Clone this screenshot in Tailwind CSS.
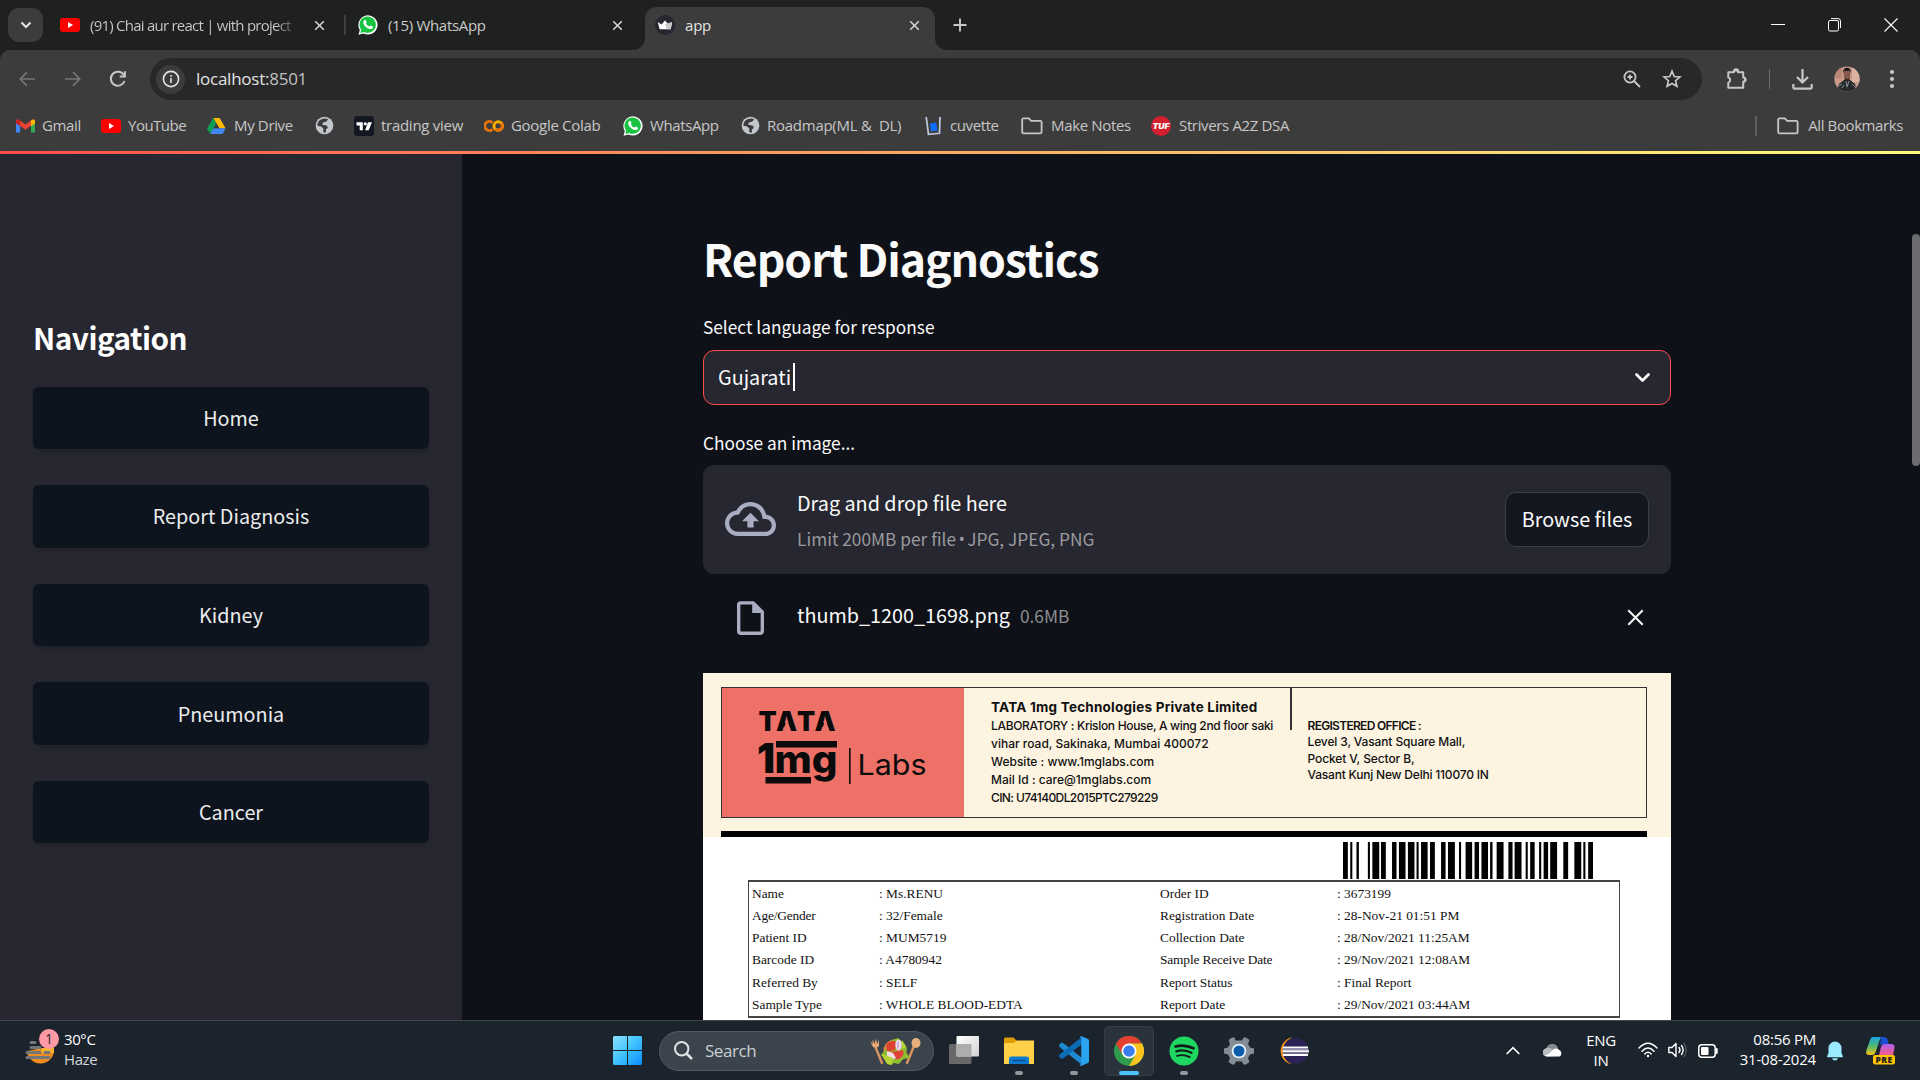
<!DOCTYPE html>
<html lang="en">
<head>
<meta charset="utf-8">
<title>app</title>
<script src="https://cdn.jsdelivr.net/npm/@tailwindcss/browser@4"></script>
</head>
<body class="w-[1920px] h-[1080px] overflow-hidden bg-[#0e1117] flex flex-col font-['Open_Sans','Noto_Sans',sans-serif]">

<svg class="hidden">
  <symbol id="yt" viewBox="0 0 20 14"><rect width="20" height="14" rx="3" fill="#f00"/><path d="M8 4v6l5-3z" fill="#fff"/></symbol>
  <symbol id="wa" viewBox="0 0 20 20"><path d="M.5 19.7 1.8 15A9.6 9.6 0 1 1 5.400 18.400z" fill="#fff"/><path d="M2.300 17.900l.9-3.200A8.200 8.200 0 1 1 6 17z" fill="#19c341"/><path d="M6.300 5.300c.5-.6 1.300-.6 1.600.1l.7 1.500c.2.500-.8 1.200-.6 1.600.8 1.500 1.900 2.500 3.400 3.100.5.100 1-1.200 1.500-1l1.700.8c.7.400.3 1.500-.3 2-1.100.9-2.600.7-4.200 0-2.200-1-3.700-2.700-4.600-4.600-.6-1.300-.2-2.600.8-3.500z" fill="#fff"/></symbol>
  <symbol id="globe" viewBox="0 0 20 20"><circle cx="10" cy="10" r="9.300" fill="#c1c5cc"/><path d="M9 2.800C5 3.200 2.400 6.400 2.500 10.200l4.100.9 2.200 2.200-.1 3.900c1 .2 2 .2 2.900-.1l-.2-3 2-1.500-.4-2.400-2.800-.6-2-.1-.3-1.800 1.600-1.300 2.700-.4.900-1.800 1.100-.2C12.600 3 11 2.500 9 2.800z" fill="#3c3c3c"/><path d="M12 5.500l-.8 1.600-3 .5-.4 1.500 5.500 1 .4 2.600 2.700-.6c1-1.600 1.200-3.600.6-5.500z" fill="#c1c5cc"/></symbol>
  <symbol id="folder" viewBox="0 0 22 18"><path d="M1.200 14.900V2.700c0-.8.600-1.400 1.400-1.400h5.200l2.400 2.600h9c.8 0 1.400.6 1.400 1.400v9.600c0 .8-.6 1.400-1.400 1.400H2.600c-.8 0-1.400-.6-1.400-1.400z" fill="none" stroke="#c7c7c7" stroke-width="1.800"/></symbol>
  <symbol id="x" viewBox="0 0 12 12"><path d="M1.300 1.300l9.400 9.400M10.700 1.300l-9.400 9.400" stroke="#d4d4d4" stroke-width="1.700" fill="none"/></symbol>
</svg>

<!-- Tab strip -->
<header class="h-[50px] shrink-0 bg-[#1f2120] flex items-center pl-2 text-[15px] text-[#c9cac9] whitespace-nowrap">
  <div class="w-[35px] h-[34px] rounded-[11px] bg-[#3c3c3c] flex items-center justify-center">
    <svg width="12" height="8" viewBox="0 0 12 8"><path d="M1.500 1.500L6 6l4.500-4.500" fill="none" stroke="#e3e3e3" stroke-width="2"/></svg>
  </div>
  <div class="w-[301px] h-full flex items-center pl-[17px]">
    <svg width="20" height="14"><use href="#yt"/></svg>
    <span class="ml-[10px] w-[211px] tracking-[-0.76px] bg-linear-to-r from-[#c9cac9] from-88% to-[#1f2120] bg-clip-text text-transparent">(91) Chai aur react | with project</span>
    <svg class="ml-[13px]" width="11" height="11"><use href="#x"/></svg>
  </div>
  <div class="w-0.5 h-5 bg-[#3f4140]"></div>
  <div class="w-[287px] h-full flex items-center pl-3">
    <svg width="20" height="20"><use href="#wa"/></svg>
    <span class="ml-[10px] flex-1 tracking-[-0.3px]">(15) WhatsApp</span>
    <svg class="mr-[10px]" width="11" height="11"><use href="#x"/></svg>
  </div>
  <svg class="self-end" width="12" height="12"><path d="M12 0v12H0A12 12 0 0 0 12 0" fill="#3c3c3c"/></svg>
  <div class="w-[290px] h-[43px] self-end rounded-t-[12px] bg-[#3c3c3c] flex items-center pl-[10px] pb-[7px] text-[#e3e3e3]">
    <svg width="20" height="20" viewBox="0 0 20 20"><circle cx="10" cy="10" r="10" fill="#262730"/><path d="M2.800 7l3.700 2.500L10 5.500l3.500 4L17.200 7l-1.500 7.200H4.600z" fill="#fff"/><path d="M10 9l7.200-2-1.500 7.200H12z" fill="#c9c9cc"/></svg>
    <span class="ml-[10px] flex-1 tracking-[-0.2px]">app</span>
    <svg class="mr-[15px]" width="11" height="11"><use href="#x"/></svg>
  </div>
  <svg class="self-end" width="12" height="12"><path d="M0 0v12h12A12 12 0 0 1 0 0" fill="#3c3c3c"/></svg>
  <svg class="ml-[6px]" width="14" height="14" viewBox="0 0 14 14"><path d="M7 .5v13M.5 7h13" stroke="#c7c7c7" stroke-width="1.900"/></svg>
  <div class="ml-auto pr-[22px] flex items-center gap-[43px]">
    <svg width="14" height="14"><path d="M0 6.500h14" stroke="#fff"/></svg>
    <svg width="13" height="14" viewBox="0 0 13 14" fill="none" stroke="#fff"><rect x=".5" y="2.500" width="10" height="10.500" rx="1.500"/><path d="M3 .6h7a2.500 2.500 0 0 1 2.500 2.500v7"/></svg>
    <svg width="14" height="14" viewBox="0 0 14 14"><path d="M.5.500l13 13M13.500.500l-13 13" stroke="#fff" stroke-width="1.100"/></svg>
  </div>
</header>

<!-- Toolbar and bookmarks -->
<div class="h-[101px] shrink-0 bg-[#1f2120]">
 <div class="h-full rounded-t-[10px] bg-[#3c3c3c] pt-2">
  <div class="h-[42px] flex items-center pl-[19px]">
    <svg width="17" height="16" viewBox="0 0 17 16" fill="none" stroke="#757575" stroke-width="1.700"><path d="M16 8H1.500M8 1.200L1.300 8 8 14.800"/></svg>
    <svg class="ml-[28px]" width="17" height="16" viewBox="0 0 17 16" fill="none" stroke="#757575" stroke-width="1.700"><path d="M1 8h14.500M9 1.200L15.700 8 9 14.800"/></svg>
    <svg class="ml-[28px]" width="18" height="18" viewBox="0 0 18 18" fill="none" stroke="#c7c7c7" stroke-width="2"><path d="M15.500 11A7 7 0 1 1 15 5.300"/><path d="M15.900 1.300v5.200h-5.200"/></svg>
    <div class="ml-[23px] w-[1552px] h-[42px] rounded-full bg-[#282828] flex items-center pl-[6px]">
      <div class="size-[29px] rounded-full bg-[#3c3c3c] flex items-center justify-center">
        <svg width="18" height="18" viewBox="0 0 18 18"><circle cx="9" cy="9" r="7.600" fill="none" stroke="#e3e3e3" stroke-width="1.600"/><path d="M9 8v5M9 5v1.700" stroke="#e3e3e3" stroke-width="1.600"/></svg>
      </div>
      <span class="ml-[11px] text-[17px] tracking-[-0.25px] text-[#e3e3e3]">localhost:<span class="text-[#c0c0c0]">8501</span></span>
      <svg class="ml-auto" width="18" height="18" viewBox="0 0 18 18" fill="none" stroke="#c7c7c7" stroke-width="1.800"><circle cx="7" cy="7" r="5.600"/><path d="M11 11l6 6M7 4.500v5M4.500 7h5"/></svg>
      <svg class="ml-[21px] mr-[20px]" width="20" height="20" viewBox="0 0 20 20"><path d="M10 2.200l2.200 5.300 5.700.5-4.300 3.700 1.300 5.600L10 14.400l-4.900 2.900 1.300-5.600L2.100 8l5.700-.5z" fill="none" stroke="#c7c7c7" stroke-width="1.700"/></svg>
    </div>
    <svg class="ml-[24px]" width="22" height="22" viewBox="0 0 22 22"><path d="M2.300 4.300h5.500a2 2 0 0 1 4.200 0h5.200v5.200a2 2 0 0 1 0 4.200v6H2.300v-5a2.700 2.700 0 0 0 0-5.200z" fill="none" stroke="#c7c7c7" stroke-width="2" stroke-linejoin="round"/><path d="M8 3.500a2 2 0 0 1 4 0M18 9.800a2 2 0 0 1 0 3.800" stroke="#c7c7c7" stroke-width="2.400" fill="none"/></svg>
    <div class="ml-[21px] w-px h-5 bg-[#6b6b6b]"></div>
    <svg class="ml-[22px]" width="21" height="21" viewBox="0 0 21 21" fill="none" stroke="#c7c7c7" stroke-width="2.200"><path d="M10.500 0v13M5 8l5.500 5.500L16 8M1.300 15v3.200c0 .8.500 1.400 1.300 1.400h15.800c.8 0 1.300-.6 1.300-1.400V15"/></svg>
    <svg class="ml-[21px]" width="26" height="26" viewBox="0 0 26 26"><defs><clipPath id="av"><circle cx="13" cy="13" r="12.600"/></clipPath></defs><g clip-path="url(#av)"><rect width="26" height="26" fill="#c99a88"/><path d="M0 0h8v12H0z" fill="#b98776"/><path d="M18 2h8v14h-8z" fill="#dcb3a2"/><path d="M3 26l2-8 5-4h6l5 4 2 8z" fill="#25292e"/><ellipse cx="13" cy="8.500" rx="3.300" ry="5" fill="#87584a"/><path d="M9 7c-.3-7 8.300-7 8 0l-1.500-2.200h-5z" fill="#171517"/><path d="M10.500 10.500c1 3.500 4.500 3.500 5.200 0l-.2 3-2.500 2-2.300-2z" fill="#2a1b19"/><path d="M12 15l1 6 2-6M5 20l3-2M18 18l4 4M8 22l2-3" stroke="#8a9096" fill="none"/></g></svg>
    <svg class="ml-[29px]" width="6" height="22" viewBox="0 0 6 22" fill="#c7c7c7"><circle cx="3" cy="4" r="2.100"/><circle cx="3" cy="11" r="2.100"/><circle cx="3" cy="18" r="2.100"/></svg>
  </div>
  <nav class="h-[51px] flex items-center pl-[16px] text-[15px] text-[#c7c7c7] whitespace-nowrap">
    <div class="w-[85px] flex items-center gap-[7px]"><svg width="19" height="14" viewBox="0 0 19 14"><path d="M0 2v11.500h4.200V6z" fill="#4285f4"/><path d="M15 6v7.500h4V2z" fill="#34a853"/><path d="M0 2.500C0 .4 2 0 3.300 1L9.500 5.600 15.500 1C17 0 19 .4 19 2.500l-4 4-5.500 4.200-5.300-4z" fill="#ea4335"/><path d="M15 1.400C17 0 19 .4 19 2.500v2L15 7.300z" fill="#fbbc04"/><path d="M0 2.500C0 .4 2 0 4.200 1.500v5.800L0 4.300z" fill="#c5221f"/></svg><span class="tracking-[-0.35px]">Gmail</span></div>
    <div class="w-[106px] flex items-center gap-[7px]"><svg width="20" height="14"><use href="#yt"/></svg><span class="tracking-[-0.5px]">YouTube</span></div>
    <div class="w-[108px] flex items-center gap-[8px]"><svg width="19" height="18" viewBox="0 0 19 18"><path d="M6.200 1h6.400l6 10.300h-6.200z" fill="#ffba00"/><path d="M6.200 1l3.200 5.500L3.300 17 0 11.500z" fill="#0f9d58"/><path d="M6.400 11.300h12.200L15.600 17H3.300z" fill="#4285f4"/><path d="M9.400 6.500l3 4.800H6.500z" fill="#3c3c3c"/></svg><span class="tracking-[-0.35px]">My Drive</span></div>
    <div class="w-[39px]"><svg width="19" height="19"><use href="#globe"/></svg></div>
    <div class="w-[130px] flex items-center gap-[7px]"><svg width="20" height="20" viewBox="0 0 20 20"><rect width="20" height="20" rx="3" fill="#131722"/><path d="M2.500 6.300h6.300v8H5.700V9.400H2.500zM14 6.300h4l-3.300 8h-3.600z" fill="#fff"/><circle cx="11.300" cy="7.800" r="1.600" fill="#fff"/></svg><span class="tracking-[-0.28px]">trading view</span></div>
    <div class="w-[139px] flex items-center gap-[7px]"><svg width="20" height="20" viewBox="0 0 20 20" fill="none" stroke-width="3"><path d="M8.500 6.600A4.600 4.600 0 1 0 8.500 13.400" stroke="#e8710a"/><circle cx="14.200" cy="10" r="4.300" stroke="#f9ab00"/><path d="M17.300 6.900a4.400 4.400 0 0 1-6.200 6.200" stroke="#e8710a"/></svg><span class="tracking-[-0.3px]">Google Colab</span></div>
    <div class="w-[118px] flex items-center gap-[7px]"><svg width="20" height="20"><use href="#wa"/></svg><span class="tracking-[-0.4px]">WhatsApp</span></div>
    <div class="w-[184px] flex items-center gap-[7px]"><svg width="19" height="19"><use href="#globe"/></svg><span class="tracking-[-0.26px]">Roadmap(ML &amp;&nbsp; DL)</span></div>
    <div class="w-[96px] flex items-center gap-[8px]"><svg width="17" height="20" viewBox="0 0 17 20"><path d="M1.200 1l2.300 17.300 11-1L15 1" fill="none" stroke="#b9c7db" stroke-width="1.800"/><path d="M5 7.500l6-1 1.500 8-6.500 1z" fill="#0d6efd"/></svg><span class="tracking-[-0.4px]">cuvette</span></div>
    <div class="w-[130px] flex items-center gap-[8px]"><svg width="22" height="18"><use href="#folder"/></svg><span class="tracking-[-0.35px]">Make Notes</span></div>
    <div class="flex items-center gap-2"><svg width="20" height="20" viewBox="0 0 20 20"><circle cx="10" cy="10" r="10" fill="#d41f30"/><text x="1.500" y="12.600" textLength="17" lengthAdjust="spacingAndGlyphs" font-family="Inter" font-weight="900" font-style="italic" font-size="7" fill="#fff">TUF</text></svg><span class="tracking-[-0.35px]">Strivers A2Z DSA</span></div>
    <div class="ml-auto w-0.5 h-5 bg-[#5f5f5f]"></div>
    <div class="ml-[20px] mr-[17px] flex items-center gap-[9px]"><svg width="22" height="18"><use href="#folder"/></svg><span class="tracking-[-0.4px]">All Bookmarks</span></div>
  </nav>
 </div>
</div>

<!-- Page -->
<div class="h-[3px] shrink-0 bg-linear-to-r from-[#ff4b4b] to-[#fffd80]"></div>
<div class="h-[866px] shrink-0 flex relative overflow-hidden font-['Noto_Sans_CJK_SC',sans-serif] text-[#fafafa] text-[19.800px]">
  <aside class="w-[462px] shrink-0 bg-[#262730] px-[33px] pt-[162px]">
    <h2 class="h-[44px] leading-[44px] text-[29.700px] tracking-[-0.5px] font-bold text-white">Navigation</h2>
    <div class="mt-[27px] flex flex-col gap-[36px] text-[#ececec]">
      <button class="h-[62.400px] rounded-[6px] bg-[#0d141e] shadow-md pb-px">Home</button>
      <button class="h-[62.400px] rounded-[6px] bg-[#0d141e] shadow-md pb-px">Report Diagnosis</button>
      <button class="h-[62.400px] rounded-[6px] bg-[#0d141e] shadow-md">Kidney</button>
      <button class="h-[62.400px] rounded-[6px] bg-[#0d141e] shadow-md">Pneumonia</button>
      <button class="h-[62.400px] rounded-[6px] bg-[#0d141e] shadow-md">Cancer</button>
    </div>
  </aside>
  <main class="ml-[241px] w-[968px] shrink-0 pt-[74px]">
    <h1 class="h-[60px] leading-[60px] text-[44.600px] tracking-[-1.050px] font-bold">Report Diagnostics</h1>
    <div class="mt-[26px] h-[26px] leading-[26px] text-[17.300px]">Select language for response</div>
    <div class="mt-[10px] h-[55px] rounded-[11px] border border-[#ff4b4b] bg-[#262730] flex items-center pl-[14px] pr-[20px]">
      <span class="mb-[2px]">Gujarati</span><span class="ml-[2px] w-0.5 h-[28px] mb-[2px] bg-white"></span>
      <svg class="ml-auto" width="15" height="10" viewBox="0 0 15 10"><path d="M1.500 1.500l6 6 6-6" fill="none" stroke="#fafafa" stroke-width="2.700" stroke-linecap="round" stroke-linejoin="round"/></svg>
    </div>
    <div class="mt-[25px] h-[26px] leading-[26px] text-[17.300px]">Choose an image...</div>
    <div class="mt-[9px] h-[109px] rounded-[11px] bg-[#262730] flex items-center px-[22px]">
      <svg class="mb-px" width="51" height="34" viewBox="0 4 24 16" fill="#a9adc1"><path d="M19.350 10.040A7.490 7.490 0 0 0 12 4C9.110 4 6.600 5.640 5.350 8.040A5.994 5.994 0 0 0 0 14c0 3.310 2.690 6 6 6h13c2.760 0 5-2.240 5-5 0-2.640-2.050-4.780-4.650-4.960zM19 18H6c-2.210 0-4-1.790-4-4 0-2.050 1.530-3.760 3.560-3.970l1.070-.11.500-.95A5.469 5.469 0 0 1 12 6c2.620 0 4.880 1.860 5.390 4.430l.3 1.500 1.530.11A2.980 2.980 0 0 1 22 15c0 1.650-1.350 3-3 3zM8 13h2.550v3h2.900v-3H16l-4-4z"/></svg>
      <div class="ml-[21px] flex flex-col">
        <span class="h-[36px] leading-[36px]">Drag and drop file here</span>
        <span class="h-[30px] leading-[30px] mt-[3px] text-[17.300px] text-[#9a9a9e]">Limit 200MB per file <span class="font-['Open_Sans'] -mx-[1.500px] inline-block">•</span> JPG, JPEG, PNG</span>
      </div>
      <button class="ml-auto w-[144px] h-[55px] rounded-[11px] border border-[#3e4048] bg-[#131720] pb-[2px]">Browse files</button>
    </div>
    <div class="h-[99px] flex items-center pl-[34px] pr-[27px] pb-[13px]">
      <svg class="mt-px" width="27" height="34" viewBox="4 2 16 20" fill="#a9adc1"><path d="M14 2H6c-1.100 0-2 .9-2 2v16c0 1.100.9 2 2 2h12c1.100 0 2-.9 2-2V8l-6-6zM6 20V4h7v5h5v11H6z"/></svg>
      <span class="ml-[33px] mb-1">thumb_1200_1698.png</span>
      <span class="ml-[10px] text-[17.300px] mb-[2px] text-[#8c8e93]">0.6MB</span>
      <svg class="ml-auto" width="17" height="17" viewBox="0 0 17 17"><path d="M1.300 1.300l14.400 14.400M15.700 1.300L1.300 15.700" stroke="#fafafa" stroke-width="2"/></svg>
    </div>

    <!-- Lab report -->
    <div class="h-[347px] bg-white text-[#111] flex flex-col">
      <div class="h-[164px] shrink-0 bg-[#fcf3e0] pl-[18px] pr-[24px] pt-[14px]">
        <div class="h-[131px] border-[1.500px] border-[#333] flex font-['Inter',sans-serif]">
          <svg class="bg-[#ee7168] shrink-0" width="242" height="129" viewBox="722 688 242 129" font-family="Inter" fill="#0b0b0b">
            <text x="758.500 776 797 814.500" y="731" font-size="26.500" font-weight="900">TATA</text>
            <path d="M787 719.500l4.300 12h-8.600zM825.500 719.500l4.300 12h-8.600z" fill="#ee7168"/>
            <text x="757" y="773" font-size="41" font-weight="900" textLength="18" lengthAdjust="spacingAndGlyphs">1</text>
            <path d="M776 741h61v6.500h-61zM765.500 777h45.500v6.500h-45.500z"/>
            <text x="774.500" y="773" font-size="39" font-weight="800" textLength="63" lengthAdjust="spacingAndGlyphs">mg</text>
            <path d="M849 748h1.600v36H849z"/>
            <text x="857.500" y="775" font-size="28.500" textLength="69" lengthAdjust="spacingAndGlyphs">Labs</text>
          </svg>
          <div class="w-[326px] shrink-0 pl-[27px] pt-[9px] text-[12px] leading-[17.900px] font-medium whitespace-nowrap">
            <div class="text-[13.500px] tracking-[0.230px] font-bold h-[20px] leading-[20px]">TATA 1mg Technologies Private Limited</div>
            <div class="tracking-[-0.320px]">LABORATORY : Krislon House, A wing 2nd floor saki</div>
            <div>vihar road, Sakinaka, Mumbai 400072</div>
            <div>Website : www.1mglabs.com</div>
            <div>Mail Id : care@1mglabs.com</div>
            <div class="tracking-[-0.600px]">CIN: U74140DL2015PTC279229</div>
          </div>
          <div class="w-[1.500px] h-[42px] bg-[#333]"></div>
          <div class="pl-[16px] pt-[30px] text-[12px] leading-[16.300px] font-medium whitespace-nowrap">
            <div class="font-semibold tracking-[-0.700px]">REGISTERED OFFICE :</div>
            <div class="tracking-[-0.130px]">Level 3, Vasant Square Mall,</div>
            <div class="tracking-[-0.100px]">Pocket V, Sector B,</div>
            <div class="tracking-[-0.200px]">Vasant Kunj New Delhi 110070 IN</div>
          </div>
        </div>
        <div class="mt-[13px] h-[6px] bg-black"></div>
      </div>
      <svg class="ml-[640px] mt-[5px] shrink-0" width="250" height="38" viewBox="561 0 724 38" preserveAspectRatio="none" id="barcode" fill="#000"></svg>
      <div class="ml-[45px] w-[872px] h-[138px] shrink-0 border-x-[1px] border-y-2 border-[#444] pl-[3px] pt-px grid grid-cols-[127px_281px_177px_1fr] auto-rows-[22.150px] items-center font-['Liberation_Serif',serif] text-[13.400px] whitespace-nowrap">
        <span>Name</span><span>: Ms.RENU</span><span>Order ID</span><span>: 3673199</span>
        <span class="tracking-[-0.200px]">Age/Gender</span><span>: 32/Female</span><span>Registration Date</span><span>: 28-Nov-21 01:51 PM</span>
        <span>Patient ID</span><span>: MUM5719</span><span>Collection Date</span><span>: 28/Nov/2021 11:25AM</span>
        <span>Barcode ID</span><span>: A4780942</span><span class="tracking-[-0.150px]">Sample Receive Date</span><span>: 29/Nov/2021 12:08AM</span>
        <span>Referred By</span><span>: SELF</span><span>Report Status</span><span>: Final Report</span>
        <span>Sample Type</span><span>: WHOLE BLOOD-EDTA</span><span>Report Date</span><span>: 29/Nov/2021 03:44AM</span>
      </div>
    </div>
  </main>
  <div class="absolute right-0 top-[80px] w-2 h-[232px] rounded-full bg-[#6b6c70]"></div>
</div>

<!-- Taskbar -->
<footer class="h-[60px] shrink-0 bg-[#1b232d] border-t border-[#42474f] flex items-center text-white text-[15px] whitespace-nowrap">
  <div class="w-[604px] pl-[25px] flex items-center">
    <svg width="36" height="48" viewBox="25 1026 36 48"><path d="M27 1050a13.500 13.500 0 0 0 27-2l-12-1z" fill="#f08c1b"/><path d="M42 1047h12v5H41z" fill="#f7b32b"/><g stroke="#73767a" stroke-width="3" stroke-linecap="round"><path d="M31 1041.500h4M31 1046.500h9M27 1051.500h13M45 1051.500h4M27 1056.500h22"/></g><circle cx="49" cy="1038" r="10" fill="#ff99a4"/><text x="49" y="1043" text-anchor="middle" font-size="14" fill="#26292e">1</text></svg>
    <div class="ml-[3px] mb-[4px] leading-[20px] tracking-[-0.4px]"><div>30°C</div><div class="text-[#d4d7da]">Haze</div></div>
  </div>
  <div class="flex items-center">
    <svg class="ml-[9px]" width="29" height="29" viewBox="0 0 29 29"><defs><linearGradient id="wn" x1="0" y1="0" x2="1" y2="1"><stop stop-color="#8ce1ff"/><stop offset=".5" stop-color="#3fc2ff"/><stop offset="1" stop-color="#0a8df8"/></linearGradient></defs><path d="M1 0h13v14H0V1zM15 0h13l1 1v13H15zM0 15h14v14H1l-1-1zM15 15h14v13l-1 1H15z" fill="url(#wn)"/></svg>
    <div class="ml-[17px] w-[275px] h-[40px] rounded-full bg-[#3b444d] border border-[#535b63] flex items-center pl-[14px] pr-[12px]">
      <svg width="19" height="19" viewBox="0 0 19 19" fill="none" stroke="#e1e3e5" stroke-width="2"><circle cx="7.700" cy="7.700" r="6.700"/><path d="M12.500 12.500l5.500 5.500" stroke-width="2.500"/></svg>
      <span class="ml-[12px] text-[17px] tracking-[-0.45px] text-[#ccd0d3]">Search</span>
      <svg class="ml-auto" width="52" height="28" viewBox="0 0 52 28"><path d="M6 9l7 17" stroke="#d99460" stroke-width="2.400" stroke-linecap="round"/><path d="M1 4l3 6q4 2 6-1l0-7-1.500 5L6.500 1.500 6 7 3.500 2.500 3.800 7z" fill="#e8a774"/><path d="M45 9l-7 17" stroke="#d99460" stroke-width="2.400" stroke-linecap="round"/><ellipse cx="47" cy="6" rx="4.500" ry="5" fill="#e8b07c"/><circle cx="26" cy="14" r="11.500" fill="#e2854b"/><path d="M12 18l4-5 2-6 5-4 6-2 6 5 3 5-1 4 4 6-7 1-4 5-5-1-5 2-2-6z" fill="#8fbc2e"/><path d="M17 8q5-6 11-3l-2 8-8 2z" fill="#e0402f"/><path d="M22 15l12-2q2 6-4 9-6 2-8-7z" fill="#e1453a"/><ellipse cx="29.500" cy="8" rx="3.200" ry="5.500" fill="#ecdaf0"/><path d="M29 5v7" stroke="#b98ac4"/><path d="M18 14l6 2 3 5-4 2-5-4z" fill="#f0dfe8"/><path d="M12 17l7 2 5 2-1 7-5-1zM33 3l4 7-4 2z" fill="#b4d334"/></svg>
    </div>
    <svg class="ml-[15px]" width="30" height="29" viewBox="0 0 30 29"><defs><linearGradient id="tv" x1="0" y1="0" x2="1" y2="1"><stop stop-color="#fff"/><stop offset="1" stop-color="#d2d2d2"/></linearGradient></defs><rect y="8" width="22.500" height="20" rx="1.500" fill="#686868"/><rect x="7.500" width="22.500" height="20.500" rx="1" fill="url(#tv)"/><path d="M7.500 8h15v12.500h-15z" fill="#adadad"/></svg>
    <div class="ml-[15px] w-[50px] h-[50px] flex flex-col items-center pt-[11px]">
      <svg width="30" height="28" viewBox="0 0 30 28"><path d="M0 2q0-1.500 1.500-1.500h8L13 4v4H0z" fill="#dd9d05"/><path d="M0 6h9.500L13 3.500h17V27H0z" fill="#ffcf48"/><path d="M5 27v-5q0-2.500 2.500-2.500h15q2.500 0 2.500 2.500v5z" fill="#0f7bd0"/><path d="M8.500 23.500h13" stroke="#074f93" stroke-width="1.500"/></svg>
      <div class="mt-[6px] w-2 h-1 rounded-full bg-[#94989d]"></div>
    </div>
    <div class="ml-[5px] w-[50px] h-[50px] flex flex-col items-center pt-[10px]">
      <svg width="30" height="30" viewBox="0 0 30 30"><path d="M0 9l2-2q1-.8 2.200 0L23 22v7L.500 11z" fill="#1f8ad2"/><path d="M0 20.500l2 2q1 .8 2.200 0L23 8V1L.500 18.500z" fill="#0a6cb5"/><path d="M22 0l7 3q1 .6 1 2v20q0 1.400-1 2l-7 3q-1 0-1.500-1L22.500 28V2L20.500 1z" fill="#2ba4f0"/><path d="M22.500 1v28l7.500-4V5z" fill="#2ba4f0"/></svg>
      <div class="mt-[5px] w-2 h-1 rounded-full bg-[#94989d]"></div>
    </div>
    <div class="ml-[5px] w-[50px] h-[50px] rounded-[5px] bg-[#2a323c] border border-[#353d46] flex flex-col items-center pt-[9px]">
      <svg width="30" height="30" viewBox="0 0 48 48"><circle cx="24" cy="24" r="24" fill="#2e9b4d"/><path d="M3.200 12A24 24 0 0 1 44.800 12H24L13.600 30z" fill="#e43e2f"/><path d="M44.800 12A24 24 0 0 1 24 48L34.400 30 24 12z" fill="#fcc31e"/><circle cx="24" cy="24" r="12" fill="#fff"/><circle cx="24" cy="24" r="9.300" fill="#3b7ded"/></svg>
      <div class="mt-[5px] w-5 h-1 rounded-full bg-[#4cc2ff]"></div>
    </div>
    <div class="ml-[5px] w-[50px] h-[50px] flex flex-col items-center pt-[10px]">
      <svg width="30" height="30" viewBox="0 0 30 30"><circle cx="15" cy="15" r="14.500" fill="#1ed760"/><g fill="none" stroke="#121a1b" stroke-linecap="round"><path d="M6.500 10.500q9-2.500 18 1.800" stroke-width="2.700"/><path d="M7.300 15.300q8-2.300 15.200 1.500" stroke-width="2.300"/><path d="M8 19.800q7-1.800 12.700 1.300" stroke-width="1.900"/></g></svg>
      <div class="mt-[5px] w-2 h-1 rounded-full bg-[#94989d]"></div>
    </div>
    <div class="ml-[5px] w-[50px] h-[50px] flex flex-col items-center pt-[10px]">
      <svg width="30" height="30" viewBox="0 0 30 30"><path d="M11.500 4.500L10.500 1.500H8L4.500 4l1.500 4-2 3.500-4 1v5l4 1L6 22l-1.500 4L8 28.500h2.500l1.500-3h6l1.500 3H22l3.500-2.500L24 22l2-3.500 4-1v-5l-4-1L24 8l1.500-4L22 1.500h-2.500l-1.500 3z" fill="#848c95"/><circle cx="15" cy="15" r="7.300" fill="#e8f2fa"/><circle cx="15" cy="15" r="5.500" fill="#0a5cad"/></svg>
    </div>
    <div class="ml-[5px] w-[50px] h-[50px] flex flex-col items-center pt-[11px]">
      <svg width="30" height="28" viewBox="0 0 30 28"><path d="M13 .5a13.700 13.700 0 0 0 0 27Q4 23 4 14T13 .500z" fill="#f7941e"/><circle cx="16.500" cy="14" r="12.800" fill="#2c2255"/><path d="M4 10.500h25M3.500 14.300h26.500M4 18h25" stroke="#fff" stroke-width="1.900"/><path d="M4 12.400h25.500M4 16.100h25.500" stroke="#a7a2c2" stroke-width="1"/></svg>
    </div>
  </div>
  <div class="ml-auto flex items-center">
    <svg width="14" height="9" viewBox="0 0 14 9"><path d="M1.200 7.500L7 1.700l5.800 5.800" fill="none" stroke="#fff" stroke-width="1.700" stroke-linecap="round"/></svg>
    <svg class="ml-[23px] mb-[2px]" width="20" height="14" viewBox="0 0 20 14"><path d="M4 9a5.500 5.500 0 0 1 2.500-7.500A5.800 5.800 0 0 1 15 5l-1 7z" fill="#868a8e"/><path d="M3.500 13.500A4 4 0 0 1 1 6.500Q4 3.500 9 6l4 7z" fill="#b9bcbf"/><path d="M2 12.500q4-1 8-6 3-2 6 .2a4 4 0 0 1 .8 6.800H4z" fill="#fff"/></svg>
    <div class="ml-[22px] mb-[2px] w-[32px] text-center leading-[20px] tracking-[-0.3px]"><div>ENG</div><div>IN</div></div>
    <svg class="ml-[21px] mb-[2px]" width="20" height="16" viewBox="0 0 20 16" fill="none" stroke="#fff" stroke-width="1.500" stroke-linecap="round"><path d="M1 6q9-9.500 18 0M4 9.200q6-6.300 12 0M6.800 12q3.200-3.300 6.400 0"/><circle cx="10" cy="14" r="1.200" fill="#fff" stroke="none"/></svg>
    <svg class="ml-[10px] mb-px" width="20" height="16" viewBox="0 0 20 16" fill="none" stroke="#fff" stroke-width="1.400" stroke-linecap="round" stroke-linejoin="round"><path d="M.8 5.500H4L8 1.500v13L4 10.500H.8z"/><path d="M11 5.500q2 2.500 0 5M13.500 3.500q3.300 4.500 0 9"/><path d="M16 1.500q4.500 6.500 0 13" stroke="#4d545c"/></svg>
    <svg class="ml-[10px]" width="20" height="14" viewBox="0 0 20 14"><rect x=".8" y=".8" width="16.400" height="12.400" rx="3" fill="none" stroke="#fff" stroke-width="1.500"/><rect x="3" y="3" width="7.500" height="8" rx="1" fill="#fff"/><path d="M18.800 5v4" stroke="#fff" stroke-width="1.800" stroke-linecap="round"/></svg>
    <div class="ml-[17px] mb-[4px] w-[81px] flex flex-col items-end leading-[20px]"><div class="tracking-[-0.250px]">08:56 PM</div><div class="tracking-[-0.200px]">31-08-2024</div></div>
    <svg class="ml-[11px]" width="16" height="20" viewBox="0 0 16 20"><path d="M0 15.500L1.500 12V7a6.500 6.500 0 0 1 13 0v5l1.500 3.500q0 .8-.8.800H.8q-.8 0-.8-.8zM5 17.300h6q-.6 2.200-3 2.200t-3-2.200z" fill="#9aebff"/></svg>
    <svg class="ml-[23px] mr-[25px]" width="29" height="29" viewBox="0 0 29 29"><defs><linearGradient id="c1" x1="0" y1="0" x2="0" y2="1"><stop stop-color="#16a7e8"/><stop offset=".5" stop-color="#51b86b"/><stop offset="1" stop-color="#f6c518"/></linearGradient><linearGradient id="c2" x1="0" y1="0" x2="0" y2="1"><stop stop-color="#b05ff0"/><stop offset="1" stop-color="#f25f86"/></linearGradient></defs><path d="M7 1h9q-2 1-3 5l-3 9q-1 4-4 4H3q-4 0-2.500-5L4 4Q5 1 7 1z" fill="url(#c1)"/><path d="M14 1h4q3 0 3.700 3l1 4H17q-3 0-4 3l2-7q.5-2-1-3z" fill="#1a4fd0"/><path d="M18 8h7q4 0 3.500 4L27 19H13l2-8q.8-3 3-3z" fill="url(#c2)"/><rect x="7" y="19" width="22" height="9.500" rx="2" fill="#ffc400"/><text x="18" y="26.800" text-anchor="middle" font-family="Open Sans" font-weight="800" font-size="8.500" letter-spacing=".4" fill="#222">PRE</text></svg>
  </div>
</footer>

<script>
  // Bar extents of the specimen barcode: [start, end] pairs
  const bars = [[561,575],[582,588],[600,607],[633,639],[646,666],[671,685],[703,716],[723,742],[749,768],[774,780],[787,806],[813,827],[845,858],[865,885],[897,903],[916,935],[942,955],[962,981],[987,994],[1006,1026],[1040,1052],[1058,1078],[1090,1096],[1103,1116],[1129,1135],[1142,1155],[1161,1181],[1199,1213],[1231,1251],[1257,1263],[1271,1285]];
  document.getElementById('barcode').innerHTML = bars.map(([a, b]) => `<rect x="${a}" width="${b - a}" height="37"/>`).join('');
</script>
</body>
</html>
